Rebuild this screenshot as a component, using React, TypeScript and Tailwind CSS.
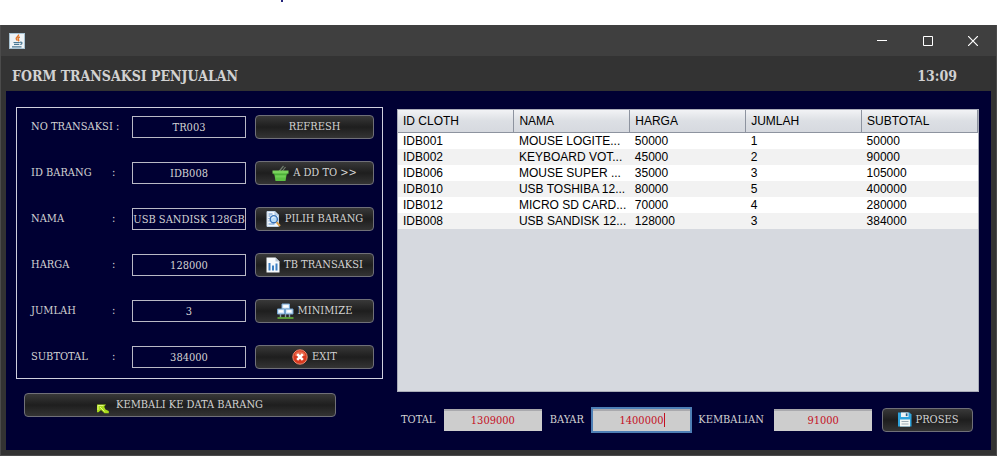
import { useState } from 'react';
import type { ReactNode } from 'react';

interface Field {
  id: string;
  label: string;
  value: string;
}

const FIELDS: Field[] = [
  { id: 'no-transaksi', label: 'NO TRANSAKSI', value: 'TR003' },
  { id: 'id-barang', label: 'ID BARANG', value: 'IDB008' },
  { id: 'nama', label: 'NAMA', value: 'USB SANDISK 128GB' },
  { id: 'harga', label: 'HARGA', value: '128000' },
  { id: 'jumlah', label: 'JUMLAH', value: '3' },
  { id: 'subtotal', label: 'SUBTOTAL', value: '384000' },
];

const COLUMNS = ['ID CLOTH', 'NAMA', 'HARGA', 'JUMLAH', 'SUBTOTAL'];

const ROWS = [
  ['IDB001', 'MOUSE LOGITE...', '50000', '1', '50000'],
  ['IDB002', 'KEYBOARD VOT...', '45000', '2', '90000'],
  ['IDB006', 'MOUSE SUPER ...', '35000', '3', '105000'],
  ['IDB010', 'USB TOSHIBA 12...', '80000', '5', '400000'],
  ['IDB012', 'MICRO SD CARD...', '70000', '4', '280000'],
  ['IDB008', 'USB SANDISK 12...', '128000', '3', '384000'],
];

function JavaIcon() {
  return (
    <svg width="16" height="16" viewBox="0 0 16 16" fill="none">
      <rect x="0.5" y="0.5" width="15" height="15" fill="#eef3f6" stroke="#a9c3d3" />
      <path d="M9.500 1.500c1 2-3.500 2.800-2.200 4.600.4.600.9 1 .9 1.600M10.800 4c-1.800.8-2.200 1.600-1.300 2.600.5.600.2 1.200-.4 1.600" stroke="#e0762c" strokeWidth="1.400" />
      <path d="M4.500 9.500h6.300M5 11.300h5.300M3 13.800h9.500M11 9.300c2.600-.7 2.600 1.900.2 2.200" stroke="#4a7894" strokeWidth="1.200" />
    </svg>
  );
}

function BasketIcon() {
  return (
    <svg width="17" height="17" viewBox="0 0 17 17">
      <path d="M7 6.500 11.500 1M10 6.500 13.500 2" stroke="#6f7d6d" strokeWidth="1.200" />
      <path d="M2 7.500h13l-1.500 8.500h-10z" fill="#5cc044" />
      <path d="M.500 5.500h16v3.200H.500z" fill="#79d35c" />
      <path d="M1.500 8.700h14v.8h-14z" fill="#3fa02f" />
      <path d="M3.200 10.500h10.600l-.4 2H3.600z" fill="#6fcf55" />
    </svg>
  );
}

function SearchDocIcon() {
  return (
    <svg width="15" height="16" viewBox="0 0 15 16" fill="none">
      <path d="M1 .500h8l3.500 3.500v11.500H1z" fill="#f3f8fd" stroke="#c1d3e6" />
      <path d="M9 .500V4h3.500" fill="#c7dcf2" stroke="#a9c3dd" />
      <path d="M2.500 3h4M2.500 5h2M2.500 7.500h1M2.500 10h1M2.500 13h6" stroke="#5b8fca" />
      <circle cx="7.800" cy="8.200" r="3.600" fill="#b9dcf8" stroke="#3a73b8" strokeWidth="1.400" />
      <path d="M6 7.500c.5-1.200 1.500-1.500 2.500-1.300" stroke="#fff" />
      <path d="m10.600 11.200 3.400 3.800" stroke="#d89c4a" strokeWidth="2" />
    </svg>
  );
}

function ChartDocIcon() {
  return (
    <svg width="14" height="16" viewBox="0 0 14 16">
      <path d="M.500.500h9l4 4v11H.500z" fill="#f6f9fc" />
      <path d="M9.500.500v4h4z" fill="#b9c8d8" />
      <path d="M2.500 6h2v7.500h-2zM6 8.500h2v5H6zM9.500 6.500h2v7h-2z" fill="#3c7fc2" />
    </svg>
  );
}

function MinimizeIcon() {
  return (
    <svg width="17" height="17" viewBox="0 0 17 17">
      <path d="M3.500 11v4M12.500 11v4M8.500 11v4" stroke="#8b9aa8" strokeWidth="1.400" />
      <path d="M.500 15h16" stroke="#5da63a" strokeWidth="1.800" />
      <path d="M5 1h7.500v5H5z" fill="#e2effb" stroke="#7ba9d6" />
      <path d="M.500 6h7v5h-7zM8.500 6h7.500v5H8.500z" fill="#d3e7fa" stroke="#6f9fcd" />
      <path d="M2 7.200h4v2H2zM10.200 7.200h4v2h-4zM6.500 2.200h4.500v2H6.500z" fill="#fff" />
    </svg>
  );
}

function ExitIcon() {
  return (
    <svg width="16" height="16" viewBox="0 0 16 16">
      <circle cx="8" cy="8" r="7.200" fill="#d8391f" stroke="#eb8a70" />
      <path d="M2.500 6.500a5.700 5.700 0 0 1 11 0q-5.500 2-11 0z" fill="#ea6a4c" />
      <path d="m5.200 5.200 5.600 5.600M10.800 5.200l-5.600 5.600" stroke="#fff" strokeWidth="2.600" />
    </svg>
  );
}

function BackArrowIcon() {
  return (
    <svg width="12" height="10" viewBox="0 0 12 10">
      <path d="M0 .500h9L7.200 2.800 8.500 5.500l3.300 1.500v2.300H7.500L4 6 1.500 8.200H0z" fill="#a9dc1c" />
      <path d="M1 1.500h5.500M1 1.500v4.500M3 3l4.500 4.500" stroke="#e4f880" fill="none" />
    </svg>
  );
}

function SaveIcon() {
  return (
    <svg width="15" height="15" viewBox="0 0 15 15">
      <path d="M1 .500h11.500L14.500 2.500v12H1z" fill="#2ea3dc" />
      <path d="M4 .500h7.500v4.500H4z" fill="#eef3f6" />
      <path d="M8.800 1.300h1.700v2.800H8.800z" fill="#27608a" />
      <path d="M3 7.500h10v7H3z" fill="#f5f7f5" />
      <path d="M4.500 9.500h7M4.500 12h7" stroke="#9eabb4" />
    </svg>
  );
}

interface ActionButtonProps {
  children: ReactNode;
  icon?: ReactNode;
  className?: string;
  onClick?: () => void;
}

function ActionButton({ children, icon, className = '', onClick }: ActionButtonProps) {
  return (
    <button
      type="button"
      onClick={onClick}
      className={`flex h-6 items-center justify-center gap-1 whitespace-nowrap rounded border border-[#707078] bg-linear-to-b from-[#393939] via-[#1e1e1e] to-[#343434] text-[#d2d2d2] ${className}`}
    >
      {icon}
      {children}
    </button>
  );
}

const ACTIONS: { label: string; icon?: ReactNode }[] = [
  { label: 'REFRESH' },
  { label: 'A DD TO >>', icon: <BasketIcon /> },
  { label: 'PILIH BARANG', icon: <SearchDocIcon /> },
  { label: 'TB TRANSAKSI', icon: <ChartDocIcon /> },
  { label: 'MINIMIZE', icon: <MinimizeIcon /> },
  { label: 'EXIT', icon: <ExitIcon /> },
];

function TitleBar() {
  return (
    <div className="flex h-[31px] items-center bg-[#3f3f3f] pl-2 text-white">
      <JavaIcon />
      <div className="ml-auto flex">
        <button type="button" aria-label="Minimize" className="flex h-[31px] w-[46px] items-center justify-center">
          <svg width="10" height="10" viewBox="0 0 10 10" stroke="currentColor"><path d="M0 4.500h10" /></svg>
        </button>
        <button type="button" aria-label="Maximize" className="flex h-[31px] w-[45px] items-center justify-center">
          <svg width="10" height="10" viewBox="0 0 10 10" fill="none" stroke="currentColor"><path d="M.500.500h9v9h-9z" /></svg>
        </button>
        <button type="button" aria-label="Close" className="flex h-[31px] w-[46px] items-center justify-center">
          <svg width="10" height="10" viewBox="0 0 10 10" stroke="currentColor" strokeWidth="1.200"><path d="m0 0 10 10M10 0 0 10" /></svg>
        </button>
      </div>
    </div>
  );
}

function TransactionTable() {
  return (
    <div className="flex-1 border border-[#a9acb8] bg-[#d6d9df]">
      <table className="w-full table-fixed border-collapse text-left font-['Liberation_Sans',Arial,sans-serif] text-xs leading-4 text-black">
        <thead>
          <tr className="h-[22px] bg-linear-to-b from-[#f2f3f5] via-[#dcdfe4] to-[#d6d9df]">
            {COLUMNS.map(c => (
              <th key={c} className="border-r border-b border-[#8d939f] p-0 pl-[5px] font-normal">{c}</th>
            ))}
          </tr>
        </thead>
        <tbody>
          {ROWS.map(row => (
            <tr key={row[0]} className="h-4 bg-white even:bg-[#f2f2f2]">
              {row.map((cell, i) => (
                <td key={i} className="whitespace-nowrap p-0 pl-[5px]">{cell}</td>
              ))}
            </tr>
          ))}
        </tbody>
      </table>
    </div>
  );
}

const AMOUNT = 'h-[22px] w-full bg-[#cdcdcd] text-center text-[#c40f1e] outline-none';

export default function App() {
  const [values, setValues] = useState(FIELDS.map(f => f.value));
  const [bayar, setBayar] = useState('1400000');

  const setValue = (i: number, value: string) => {
    setValues(prev => prev.map((v, n) => (n === i ? value : v)));
  };

  return (
    <div className="flex min-h-screen flex-col bg-white font-[Rockwell,'DejaVu_Serif_Condensed','DejaVu_Serif',serif] text-[11px] leading-4">
      <div className="flex h-[25px] justify-center">
        <span className="mr-[433px] size-[2px] bg-[#25257c]" />
      </div>
      <div className="flex flex-1 flex-col border border-t-0 border-[#4b4b4b] bg-[#333333]">
        <TitleBar />
        <header className="flex h-[35px] items-center justify-between pt-1 pr-[39px] pl-[11px] text-sm font-bold text-[#d2d2d2]">
          <h1>FORM TRANSAKSI PENJUALAN</h1>
          <time>13:09</time>
        </header>

        <main className="mx-[5px] mb-[5px] flex flex-1 gap-[14px] bg-[#000033] pr-3 pl-[10px] text-[#d2d2d2]">
          <section className="w-[367px] shrink-0 pt-4">
            <div className="flex flex-col gap-[22px] border border-[#d0d0de] pt-[7px] pr-2 pb-[9px] pl-[14px]">
              {FIELDS.map((f, i) => (
                <div key={f.id} className="flex h-6 items-center">
                  <label htmlFor={f.id} className="flex w-[101px] whitespace-nowrap">
                    <span className={i === 0 ? 'w-[85px]' : 'w-[81px]'}>{f.label}</span>:
                  </label>
                  <input
                    id={f.id}
                    value={values[i]}
                    onChange={e => setValue(i, e.target.value)}
                    className="mr-[9px] h-[22px] w-[114px] border border-[#b9b9c6] bg-transparent text-center outline-none"
                  />
                  <ActionButton icon={ACTIONS[i].icon} className="flex-1">{ACTIONS[i].label}</ActionButton>
                </div>
              ))}
            </div>
            <ActionButton icon={<span className="pt-2 pr-[3px]"><BackArrowIcon /></span>} className="mt-[14px] ml-2 w-[312px]">
              KEMBALI KE DATA BARANG
            </ActionButton>
          </section>

          <section className="flex flex-1 flex-col pt-[18px]">
            <TransactionTable />
            <div className="flex h-[58px] items-center pr-[6px] pb-[3px] pl-1">
              <label htmlFor="total" className="w-[43px]">TOTAL</label>
              <div className="flex-1">
                <input id="total" readOnly value="1309000" className={`${AMOUNT} border-t-2 border-[#a9a9ad]`} />
              </div>
              <label htmlFor="bayar" className="w-[51px] pl-2">BAYAR</label>
              <div className="relative flex-1">
                <input
                  id="bayar"
                  value={bayar}
                  onChange={e => setBayar(e.target.value)}
                  className={`${AMOUNT} border-t-2 border-[#a9a9ad] ring-2 ring-[#4e7fb5]`}
                />
                <span className="absolute top-1 left-1/2 ml-[22px] h-[14px] w-px bg-[#c40f1e]" />
              </div>
              <label htmlFor="kembalian" className="w-[84px] pl-2">KEMBALIAN</label>
              <div className="flex-1">
                <input id="kembalian" readOnly value="91000" className={`${AMOUNT} border-t-2 border-[#a9a9ad]`} />
              </div>
              <ActionButton icon={<SaveIcon />} className="ml-[10px] w-[91px]">PROSES</ActionButton>
            </div>
          </section>
        </main>
      </div>
    </div>
  );
}
